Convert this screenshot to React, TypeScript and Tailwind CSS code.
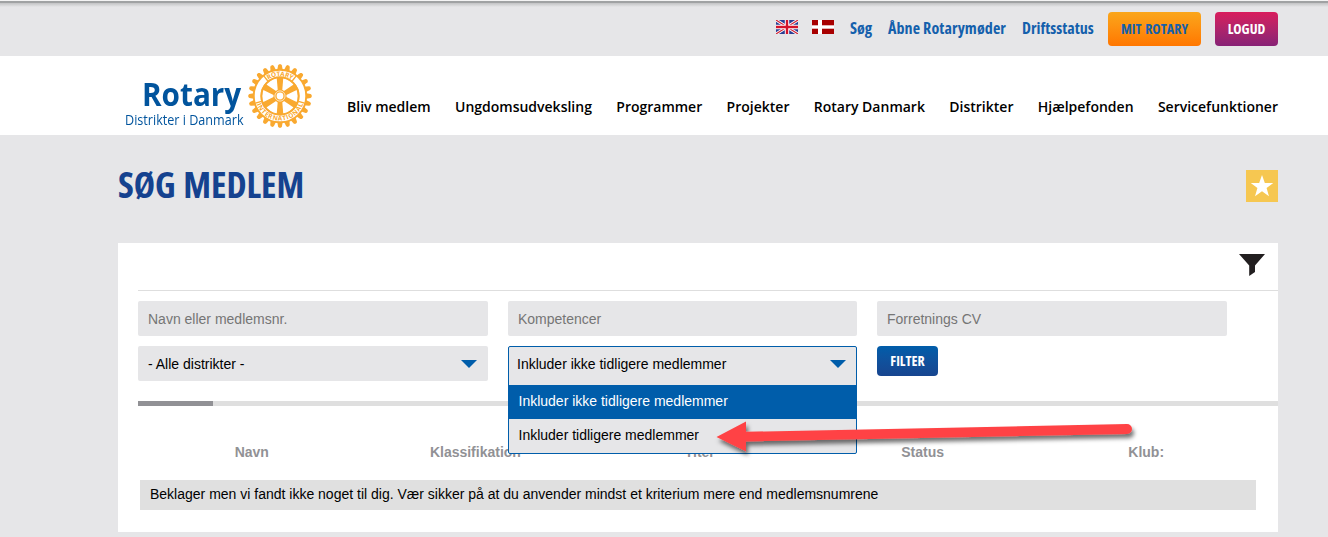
const nav = ["Bliv medlem", "Ungdomsudveksling", "Programmer", "Projekter", "Rotary Danmark", "Distrikter", "Hjælpefonden", "Servicefunktioner"];
const columns = ["Navn", "Klassifikation", "Titel", "Status", "Klub:"];
const teeth = Array.from({ length: 24 }, (_, i) => i * 15);
const spokes = [0, 60, 120, 180, 240, 300];

function BritishFlag() {
  return (
    <svg width="22" height="14" viewBox="0 0 22 14">
      <rect width="22" height="14" fill="#2a3f94" />
      <path d="M0 0L22 14M22 0L0 14" stroke="#fff" strokeWidth="3" />
      <path d="M0 0L22 14M22 0L0 14" stroke="#d22637" strokeWidth="1.2" />
      <path d="M11 0V14M0 7H22" stroke="#fff" strokeWidth="4.4" />
      <path d="M11 0V14M0 7H22" stroke="#d3132b" strokeWidth="2.4" />
    </svg>
  );
}

function DanishFlag() {
  return (
    <svg width="22" height="14" viewBox="0 0 22 14">
      <rect width="22" height="14" fill="#a80000" />
      <path d="M8 0V14" stroke="#fff" strokeWidth="4" />
      <path d="M0 7H22" stroke="#fff" strokeWidth="3.4" />
    </svg>
  );
}

function Wheel() {
  return (
    <svg width="64" height="64" viewBox="-32 -32 64 64">
      <defs>
        <path id="arcTop" d="M-20 0A20 20 0 0 1 20 0" />
        <path id="arcBottom" d="M-24.6 0A24.6 24.6 0 0 0 24.6 0" />
      </defs>
      {teeth.map((a) => (
        <path key={a} d="M-3 -25L-1.9 -30.6L-1 -31.7H1L1.9 -30.6L3 -25Z" fill="#f9a930" transform={`rotate(${a})`} />
      ))}
      <circle r="27.2" fill="#f9a930" />
      <circle r="22.4" fill="none" stroke="#fff" strokeWidth="5.8" />
      <circle r="18" fill="#fff" />
      <circle r="18.6" fill="none" stroke="#f9a930" strokeWidth="1.9" />
      {spokes.map((a) => (
        <path key={a} d="M-2.2 -5L-3.3 -18.5H3.3L2.2 -5Z" fill="#f9a930" transform={`rotate(${a})`} />
      ))}
      {[-39, 39, -106, 106].map((a) => (
        <path key={a} d="M0 -25.5V-19.3" stroke="#f9a930" strokeWidth="1.3" transform={`rotate(${a})`} />
      ))}
      <circle r="6.6" fill="#f9a930" />
      <circle r="5.1" fill="none" stroke="#fff" strokeWidth="0.7" />
      <circle r="3.4" fill="#fff" />
      <g fill="#f9a930" fontFamily="Open Sans, sans-serif" fontWeight="700" fontSize="6.4">
        <text textAnchor="middle"><textPath href="#arcTop" startOffset="50%" textLength="25">ROTARY</textPath></text>
        <text textAnchor="middle"><textPath href="#arcBottom" startOffset="50%" textLength="60">INTERNATIONAL</textPath></text>
      </g>
    </svg>
  );
}

function Triangle() {
  return <svg width="16" height="8" viewBox="0 0 16 8"><path d="M0 0H16L8 8Z" fill="#005daa" /></svg>;
}

export default function App() {
  return (
    <div className="relative h-[537px] w-[1328px] overflow-hidden bg-[#e6e6e8] font-['Liberation_Sans',sans-serif] text-sm text-black">
      <div className="flex h-14 flex-col">
        <div className="h-px shrink-0 bg-[#f4f4f4]" />
        <div className="h-[2px] shrink-0 bg-[#a0a2a3]" />
        <div className="h-1 shrink-0 bg-linear-to-b from-[#c2c3c4] to-[#e6e6e8]" />
        <div className="flex h-[44px] items-start pt-[5px] pl-[776px] font-['Open_Sans',sans-serif] text-base leading-[34px] font-bold whitespace-nowrap text-[#1460ac] font-stretch-condensed">
          <div className="w-9 pt-2"><BritishFlag /></div>
          <div className="w-[38px] pt-2"><DanishFlag /></div>
          <span className="-mt-px w-[38px]">Søg</span>
          <span className="-mt-px w-[134px] tracking-[0.1px]">Åbne Rotarymøder</span>
          <span className="-mt-px w-[86px]">Driftsstatus</span>
          <div className="h-[34px] w-[93px] rounded bg-linear-to-b from-[#faa61a] to-[#ff7600] text-center text-sm leading-[34px] tracking-[0.05px] [word-spacing:1px]">MIT ROTARY</div>
          <div className="ml-[14px] h-[34px] w-[63px] rounded bg-linear-to-b from-[#d91b5c] to-[#872175] text-center text-sm leading-[34px] text-white">LOGUD</div>
        </div>
      </div>

      <header className="flex h-[79px] bg-white">
        <div className="ml-[125px] flex w-[222px]">
          <div className="w-[123px] pt-[18px] font-['Open_Sans',sans-serif] whitespace-nowrap text-[#01549d]">
            <div className="pl-[17px] text-[33px] leading-[39px] font-bold"><span className="inline-block origin-left scale-x-[0.9]">Rotary</span></div>
            <div className="text-sm leading-[14px]"><span className="inline-block origin-left scale-x-[0.9]">Distrikter i Danmark</span></div>
          </div>
          <div className="pt-2"><Wheel /></div>
        </div>
        <nav className="flex w-[931px] justify-between pt-[41px] font-['Open_Sans',sans-serif] text-sm leading-5 font-semibold whitespace-nowrap">
          {nav.map((item) => <span key={item}>{item}</span>)}
        </nav>
      </header>

      <main className="ml-[118px] w-[1160px]">
        <div className="flex h-[108px] items-start justify-between">
          <h1 className="pt-[26px] font-['Open_Sans',sans-serif] text-[36px] leading-[48px] font-bold text-[#15428f] [word-spacing:1px] font-stretch-condensed">SØG MEDLEM</h1>
          <div className="mt-[35px] flex size-8 items-center justify-center bg-[#f6c751]">
            <svg width="24" height="24" viewBox="0 0 22 22"><path d="M11 1L13.6 8.2H21.3L15.2 12.8L17.4 20.4L11 15.9L4.6 20.4L6.8 12.8L0.7 8.2H8.4Z" fill="#fff" /></svg>
          </div>
        </div>

        <section className="h-[289px] bg-white pl-5">
          <div className="flex h-12 justify-end border-b border-[#dedede] pt-[10px] pr-[13px]">
            <svg width="26" height="24" viewBox="0 0 26 24"><path d="M0 1H26L16 12.5V19L10.2 23V12.5Z" fill="#221f20" /></svg>
          </div>
          <div className="grid grid-cols-[350px_349px_350px] gap-x-5 gap-y-[10px] pt-[10px]">
            {["Navn eller medlemsnr.", "Kompetencer", "Forretnings CV"].map((label) => (
              <div key={label} className="flex h-[35px] items-center rounded-xs bg-[#e6e6e8] px-[10px] pt-px text-[#757575]">{label}</div>
            ))}
            <div className="flex h-[35px] items-center justify-between rounded-xs bg-[#e6e6e8] pr-[11px] pl-[10px] pt-px">
              <span>- Alle distrikter -</span><Triangle />
            </div>
            <div className="relative h-[35px]">
              <div className="absolute inset-x-0 top-0 z-10 h-[108px] rounded-xs border border-[#005daa] bg-[#e6e6e8]">
                <div className="flex h-[38px] items-start justify-between pt-[7px] pr-[10px] pl-[8px] leading-5">
                  <span>Inkluder ikke tidligere medlemmer</span><div className="pt-[6px]"><Triangle /></div>
                </div>
                <div className="h-[34px] bg-[#005daa] pl-[9.5px] leading-8 text-white">Inkluder ikke tidligere medlemmer</div>
                <div className="h-[34px] pl-[9.5px] leading-8">Inkluder tidligere medlemmer</div>
              </div>
            </div>
            <div className="flex h-[30px] w-[61px] items-center justify-center rounded bg-linear-to-b from-[#005daa] to-[#17458f] font-['Open_Sans',sans-serif] font-bold text-white font-stretch-condensed">FILTER</div>
          </div>
          <div className="mt-5 h-[5px] bg-[#dfdfdf]"><div className="h-full w-[75px] bg-[#919195]" /></div>
          <div className="ml-[2px] grid w-[1118px] grid-cols-5 pt-[36px] text-center leading-5 font-bold text-[#919195]">
            {columns.map((column) => <span key={column}>{column}</span>)}
          </div>
          <div className="mt-[18px] ml-[2px] h-[30px] w-[1116px] bg-[#e0e0e0] pl-[10px] leading-[29px]">Beklager men vi fandt ikke noget til dig. Vær sikker på at du anvender mindst et kriterium mere end medlemsnumrene</div>
        </section>
      </main>

      <svg className="absolute top-[415px] left-[710px] z-20" width="430" height="50" viewBox="710 415 430 50">
        <defs><filter id="arrowShadow" x="-5%" y="-50%" width="110%" height="220%"><feDropShadow dx="2" dy="4" stdDeviation="2" floodColor="#000" floodOpacity="0.55" /></filter></defs>
        <path d="M716.5 437L746 421.5V431.8L1127 424A5 5 0 0 1 1127 434L746 441.5V451.5Z" fill="#ff4344" filter="url(#arrowShadow)" />
      </svg>
    </div>
  );
}
